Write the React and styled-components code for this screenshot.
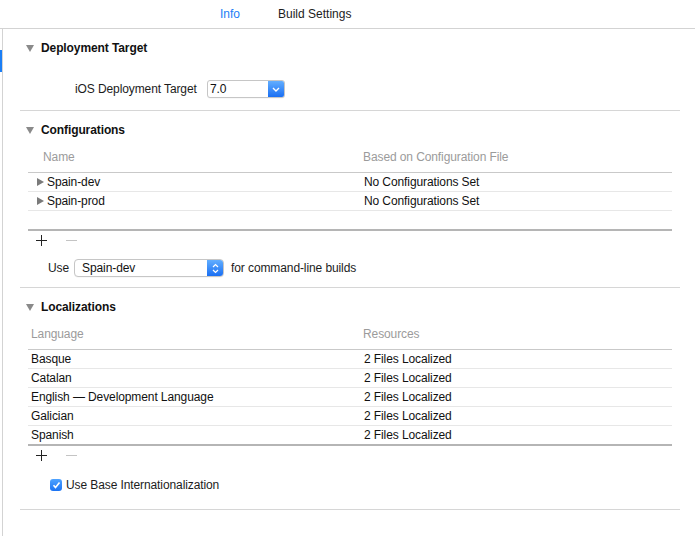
import styled, { createGlobalStyle } from "styled-components"

const Global = createGlobalStyle`
    body {
        margin: 0;
        background: #fff;
        font-family: "Liberation Sans", Arial, sans-serif;
        font-size: 12px;
        letter-spacing: -0.1px;
        color: #1c1c1c;
    }
`

const TabBar = styled.div`
    height: 28px;
    border-bottom: 1px solid #d3d3d3;
    display: flex;
    align-items: center;
    gap: 38px;
    padding-left: 220px;
    letter-spacing: 0;
`

const Tab = styled.span`
    color: ${p => p.$active ? '#1b7ef5' : '#1c1c1c'};
`

const Main = styled.div`
    position: relative;
    display: flex;
    min-height: calc(100vh - 29px);
    margin-left: 2px;
    border-left: 1px solid #d3d3d3;
`

const Marker = styled.div`
    position: absolute;
    left: -3px;
    top: 21px;
    width: 2px;
    height: 22px;
    background: #1b7ef5;
`

const Content = styled.div`
    flex: 1;
    padding: 0 15px 0 17px;
`

const Section = styled.div`
    border-bottom: 1px solid #d6d6d6;
    padding: 11px 0 ${p => p.$bottom}px;
`

const SectionHeader = styled.div`
    display: flex;
    align-items: center;
    gap: 7px;
    height: 16px;
    padding-left: 6px;
    font-weight: bold;
    color: #111;
`

const TargetRow = styled.div`
    display: flex;
    align-items: center;
    margin-top: 24px;
    padding-left: 55px;
`

const TargetLabel = styled.span`
    width: 132px;
`

const Popup = styled.div`
    display: flex;
    width: ${p => p.$w}px;
    height: 18px;
    box-sizing: border-box;
    border: 1px solid #c6c6c6;
    border-radius: ${p => p.$round}px;
    overflow: hidden;
    background: #fff;
    box-shadow: 0 0.5px 0 rgba(0, 0, 0, 0.06);
`

const PopupValue = styled.span`
    flex: 1;
    display: flex;
    align-items: center;
    padding-left: ${p => p.$pad}px;
    color: #111;
`

const Stepper = styled.span`
    width: 16px;
    display: flex;
    align-items: center;
    justify-content: center;
    background: linear-gradient(#62aeff, #1a6ff3);
`

const ColumnHeader = styled.div`
    display: grid;
    grid-template-columns: 335px 1fr;
    margin: 11px 8px 0;
    padding-bottom: 7px;
    line-height: 16px;
    border-bottom: 1px solid #c9c9c9;
    color: #9b9b9b;
`

const HeadCell = styled.span`
    padding-left: ${p => p.$indent}px;
`

const Table = styled.div`
    margin: 0 8px;
`

const Row = styled.div`
    display: grid;
    grid-template-columns: 335px 1fr;
    align-items: center;
    height: 18px;
    border-bottom: 1px solid #e7e7e7;

    &:last-child {
        border-bottom: 2px solid #b5b5b5;
    }
`

const Cell = styled.span`
    display: flex;
    align-items: center;
    gap: 3px;
    padding-left: ${p => p.$indent}px;
    color: #111;
`

const AddRemove = styled.div`
    display: flex;
    align-items: center;
    gap: 19px;
    height: 18px;
    padding-left: 16px;
`

const UseRow = styled.div`
    display: flex;
    align-items: center;
    margin-top: 10px;
    padding-left: 28px;
`

const UseLabel = styled.span`
    margin-right: 5px;
`

const UseSuffix = styled.span`
    margin-left: 7px;
`

const CheckRow = styled.label`
    display: flex;
    align-items: center;
    gap: 4px;
    height: 14px;
    margin-top: 14px;
    padding-left: 30px;
`

const CheckBox = styled.span`
    width: 12px;
    height: 12px;
    border-radius: 3px;
    background: linear-gradient(#4fa3ff, #1b73f3);
    display: flex;
    align-items: center;
    justify-content: center;
`

const DownTriangle = () => (
    <svg width="8" height="7" viewBox="0 0 8 7">
        <polygon points="0,0 8,0 4,7" fill="#8a8a8a" />
    </svg>
)

const RightTriangle = () => (
    <svg width="7" height="8" viewBox="0 0 7 8">
        <polygon points="0,0 7,4 0,8" fill="#7a7a7a" />
    </svg>
)

const Plus = () => (
    <svg width="11" height="11" viewBox="0 0 11 11">
        <path d="M5.5 0v11M0 5.5h11" stroke="#222" strokeWidth="1" />
    </svg>
)

const Minus = () => (
    <svg width="11" height="11" viewBox="0 0 11 11">
        <path d="M0 5.5h11" stroke="#c4c4c4" strokeWidth="1" />
    </svg>
)

const ChevronDown = () => (
    <svg width="8" height="5" viewBox="0 0 8 5">
        <path d="M1 1l3 3 3-3" stroke="#fff" strokeWidth="1.4" fill="none" />
    </svg>
)

const ChevronUpDown = () => (
    <svg width="7" height="11" viewBox="0 0 7 11">
        <path d="M1 4l2.5-2.5L6 4M1 7l2.5 2.5L6 7" stroke="#fff" strokeWidth="1.2" fill="none" />
    </svg>
)

const Check = () => (
    <svg width="9" height="8" viewBox="0 0 9 8">
        <path d="M1.5 4.2l2 2.2L7.5 1.5" stroke="#fff" strokeWidth="1.6" fill="none" />
    </svg>
)

const configurations = ['Spain-dev', 'Spain-prod']
const languages = ['Basque', 'Catalan', 'English \u2014 Development Language', 'Galician', 'Spanish']

const App = () => {
    return (
        <>
            <Global />
            <TabBar>
                <Tab $active>Info</Tab>
                <Tab>Build Settings</Tab>
            </TabBar>
            <Main>
                <Marker />
                <Content>
                    <Section $bottom={12}>
                        <SectionHeader>
                            <DownTriangle />
                            Deployment Target
                        </SectionHeader>
                        <TargetRow>
                            <TargetLabel>iOS Deployment Target</TargetLabel>
                            <Popup $w={78} $round={3}>
                                <PopupValue $pad={2}>7.0</PopupValue>
                                <Stepper><ChevronDown /></Stepper>
                            </Popup>
                        </TargetRow>
                    </Section>

                    <Section $bottom={10}>
                        <SectionHeader>
                            <DownTriangle />
                            Configurations
                        </SectionHeader>
                        <ColumnHeader>
                            <HeadCell $indent={15}>Name</HeadCell>
                            <HeadCell $indent={0}>Based on Configuration File</HeadCell>
                        </ColumnHeader>
                        <Table>
                            {configurations.map(name => (
                                <Row key={name}>
                                    <Cell $indent={9}><RightTriangle />{name}</Cell>
                                    <Cell $indent={1}>No Configurations Set</Cell>
                                </Row>
                            ))}
                            <Row />
                        </Table>
                        <AddRemove>
                            <Plus />
                            <Minus />
                        </AddRemove>
                        <UseRow>
                            <UseLabel>Use</UseLabel>
                            <Popup $w={150} $round={4}>
                                <PopupValue $pad={7}>Spain-dev</PopupValue>
                                <Stepper><ChevronUpDown /></Stepper>
                            </Popup>
                            <UseSuffix>for command-line builds</UseSuffix>
                        </UseRow>
                    </Section>

                    <Section $bottom={17}>
                        <SectionHeader>
                            <DownTriangle />
                            Localizations
                        </SectionHeader>
                        <ColumnHeader>
                            <HeadCell $indent={3}>Language</HeadCell>
                            <HeadCell $indent={0}>Resources</HeadCell>
                        </ColumnHeader>
                        <Table>
                            {languages.map(lang => (
                                <Row key={lang}>
                                    <Cell $indent={3}>{lang}</Cell>
                                    <Cell $indent={1}>2 Files Localized</Cell>
                                </Row>
                            ))}
                        </Table>
                        <AddRemove>
                            <Plus />
                            <Minus />
                        </AddRemove>
                        <CheckRow>
                            <CheckBox><Check /></CheckBox>
                            Use Base Internationalization
                        </CheckRow>
                    </Section>
                </Content>
            </Main>
        </>
    )
}

export default App
